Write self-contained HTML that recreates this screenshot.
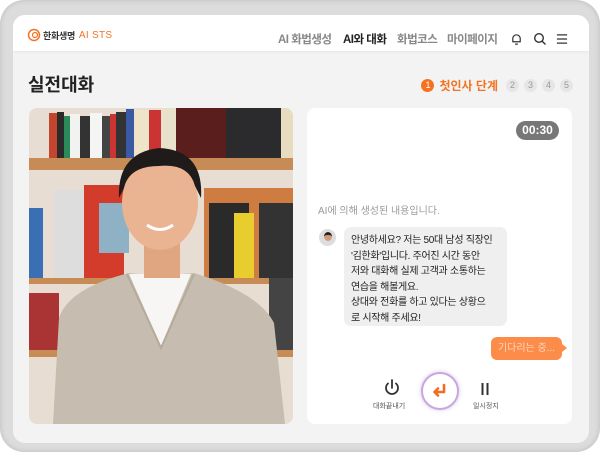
<!DOCTYPE html>
<html><head><meta charset="utf-8"><style>
*{margin:0;padding:0;box-sizing:border-box}
body{width:600px;height:457px;background:#fff;font-family:"Liberation Sans","Noto Sans CJK KR",sans-serif;position:relative;overflow:hidden}
.bezel{position:absolute;left:0;top:0;width:600px;height:452px;background:#dcdcdc;border-radius:24px;box-shadow:inset 0 0 6px rgba(0,0,0,.15)}
.screen{position:absolute;left:13px;top:15px;width:576px;height:428px;background:#f3f3f3;border-radius:12px;overflow:hidden}
.hdr{position:absolute;left:0;top:0;width:576px;height:36px;background:#fff;box-shadow:0 1px 3px rgba(0,0,0,.06)}
.logo{position:absolute;left:14px;top:13px;display:flex;align-items:center;font-size:9px;font-weight:bold;color:#333;letter-spacing:-.3px}
.nav span{position:absolute;top:16px;font-size:11.5px;color:#888;font-weight:bold;letter-spacing:-.5px;white-space:nowrap}
.title{position:absolute;left:15px;top:56px;font-size:18px;font-weight:bold;color:#222}
.steps{position:absolute;right:16px;top:62px;display:flex;align-items:center;gap:5px;font-size:11px}
.dot{width:13px;height:13px;border-radius:50%;background:#e6e6e6;color:#999;font-size:9px;text-align:center;line-height:13px}
.photo{position:absolute;left:16px;top:93px;width:264px;height:316px;border-radius:8px;overflow:hidden}
.chat{position:absolute;left:294px;top:93px;width:265px;height:316px;background:#fff;border-radius:8px}
</style></head><body>
<div class="bezel"></div>
<div class="screen">
 <div class="hdr">
  <div class="logo"><svg width="14" height="14" viewBox="0 0 14 14"><circle cx="7" cy="7" r="5.5" fill="none" stroke="#f37321" stroke-width="1.5"/><circle cx="8" cy="7" r="2.5" fill="none" stroke="#f37321" stroke-width="1.2"/></svg><span style="margin-left:2px">한화생명</span><span style="color:#f37321;margin-left:4px;font-size:10px;font-weight:normal;letter-spacing:.3px">AI STS</span></div>
  <div class="nav"><span style="left:265px">AI 화법생성</span><span style="left:330px;color:#222">AI와 대화</span><span style="left:384px">화법코스</span><span style="left:434px">마이페이지</span></div>
  <svg style="position:absolute;left:497px;top:17px" width="13" height="14" viewBox="0 0 14 14" fill="none" stroke="#333" stroke-width="1.3"><path d="M3 10V6.5a4 4 0 0 1 8 0V10H2.5h9M5.5 12.5h3"/></svg>
  <svg style="position:absolute;left:520px;top:17px" width="14" height="14" viewBox="0 0 14 14" fill="none" stroke="#333" stroke-width="1.4"><circle cx="6" cy="6" r="4.3"/><path d="M9.2 9.2L12.5 12.5"/></svg>
  <svg style="position:absolute;left:543px;top:17px" width="12" height="14" viewBox="0 0 13 14" stroke="#333" stroke-width="1.3"><path d="M1 2.5h11M1 7h11M1 11.5h11"/></svg>
 </div>
 <div class="title">실전대화</div>
 <div class="steps"><span style="display:inline-block;width:13px;height:13px;border-radius:50%;background:#f37321;color:#fff;font-size:9px;text-align:center;line-height:13px">1</span><span style="color:#f37321;font-weight:bold;font-size:12px;margin-right:3px">첫인사 단계</span><span class="dot">2</span><span class="dot">3</span><span class="dot">4</span><span class="dot">5</span></div>
 <div class="photo"><svg width="264" height="316" viewBox="0 0 264 316">
  <rect width="264" height="316" fill="#e8ddd2"/>
  <g>
   <rect x="20" y="5" width="8" height="45" fill="#c4452e"/><rect x="28" y="4" width="7" height="46" fill="#2a2a2a"/><rect x="35" y="8" width="6" height="42" fill="#2a8a5a"/><rect x="41" y="6" width="10" height="44" fill="#f2f2f0"/><rect x="51" y="8" width="10" height="42" fill="#333"/><rect x="61" y="5" width="12" height="45" fill="#f5f5f3"/><rect x="73" y="8" width="8" height="42" fill="#444"/><rect x="81" y="6" width="6" height="44" fill="#c33"/><rect x="87" y="4" width="10" height="46" fill="#333"/><rect x="97" y="1" width="8" height="49" fill="#3b5aa5"/><rect x="105" y="2" width="15" height="48" fill="#eee4c8"/><rect x="120" y="2" width="12" height="48" fill="#c33"/><rect x="132" y="0" width="15" height="50" fill="#e8e2cc"/><rect x="147" y="0" width="50" height="50" fill="#5a1e1c"/><rect x="197" y="0" width="55" height="50" fill="#2b2b2e"/><rect x="252" y="0" width="12" height="50" fill="#e8dcc0"/>
  </g>
  <rect y="50" width="264" height="12" fill="#c78b55"/>
  <rect x="0" y="100" width="14" height="70" fill="#3a6fb5"/>
  <rect x="25" y="82" width="40" height="88" fill="#ddd"/><rect x="55" y="77" width="40" height="93" fill="#d33b2a"/><rect x="70" y="95" width="30" height="50" fill="#8fb1c6"/>
  <rect x="175" y="80" width="89" height="90" fill="#cf7c43"/><rect x="180" y="95" width="40" height="75" fill="#2a2a2a"/><rect x="205" y="105" width="20" height="65" fill="#e8cd2e"/><rect x="230" y="95" width="34" height="75" fill="#333"/>
  <rect y="170" width="264" height="6" fill="#c78b55"/>
  <rect x="0" y="185" width="30" height="57" fill="#a33"/><rect x="240" y="170" width="24" height="72" fill="#444"/>
  <rect y="242" width="264" height="7" fill="#c78b55"/>
  <path d="M24 316 L30 210 Q40 180 100 165 L130 168 L165 165 Q230 185 245 215 L256 316Z" fill="#c6bdb0"/>
  <path d="M100 166 L162 166 L132 238Z" fill="#f7f6f4"/>
  <path d="M98 166 L132 240 L165 166" fill="none" stroke="#b5ab9c" stroke-width="2"/>
  <rect x="115" y="120" width="36" height="50" fill="#e0a682"/>
  <ellipse cx="131" cy="95" rx="38" ry="47" fill="#eab391"/>
  <path d="M90 90 Q88 45 130 40 Q175 42 172 90 L166 78 Q160 55 130 58 Q100 58 95 80Z" fill="#1f1b1a"/>
  <path d="M118 117 Q131 126 144 117" stroke="#fff" stroke-width="3" fill="none"/>
 </svg></div>
 <div class="chat">
  <div style="position:absolute;right:13px;top:13px;background:#777;color:#fff;border-radius:10px;font-size:12px;font-weight:bold;width:43px;height:19px;text-align:center;line-height:19px">00:30</div>
  <div style="position:absolute;left:11px;top:94px;font-size:10px;color:#999">AI에 의해 생성된 내용입니다.</div>
  <div style="position:absolute;left:12px;top:121px;width:17px;height:17px;border-radius:50%;background:#ddd;overflow:hidden"><div style="margin:3px auto 0;width:8px;height:9px;border-radius:50%;background:#d29a7c;border-top:3px solid #222"></div></div>
  <div style="position:absolute;left:37px;top:119px;width:163px;height:99px;background:#efefef;border-radius:7px;padding:6px 7px;font-size:10px;line-height:15.6px;color:#222;letter-spacing:-.3px;white-space:nowrap">안녕하세요? 저는 50대 남성 직장인<br>'김한화'입니다. 주어진 시간 동안<br>저와 대화해 실제 고객과 소통하는<br>연습을 해볼게요.<br>상대와 전화를 하고 있다는 상황으<br>로 시작해 주세요!</div>
  <div style="position:absolute;left:184px;top:229px;width:71px;height:23px;background:#fb8c4a;border-radius:6px;color:#ffd8bd;font-size:10px;line-height:23px;text-align:center">기다리는 중...</div>
  <div style="position:absolute;left:255px;top:236px;width:0;height:0;border-left:5px solid #fb8c4a;border-top:4px solid transparent;border-bottom:4px solid transparent"></div>
  <svg style="position:absolute;left:76px;top:270px" width="18" height="20" viewBox="0 0 18 20" fill="none" stroke="#333" stroke-width="1.8" stroke-linecap="round"><path d="M9 2v8M5 5.5a6 6 0 1 0 8 0"/></svg>
  <div style="position:absolute;left:66px;top:293px;font-size:7px;color:#555">대화끝내기</div>
  <div style="position:absolute;left:114px;top:264px;width:38px;height:38px;border-radius:50%;background:#fff;border:2px solid #c9a6dd;box-shadow:0 0 4px rgba(180,140,220,.5)"></div>
  <svg style="position:absolute;left:124px;top:274px" width="18" height="18" viewBox="0 0 18 18" fill="none" stroke="#f36b21" stroke-width="2.6" stroke-linecap="round" stroke-linejoin="round"><path d="M13 3v7H4M7 6.5L3.5 10 7 13.5"/></svg>
  <svg style="position:absolute;left:173px;top:274px" width="10" height="14" viewBox="0 0 10 14" stroke="#333" stroke-width="2"><path d="M2.5 1v12M7.5 1v12"/></svg>
  <div style="position:absolute;left:166px;top:293px;font-size:7px;color:#555">일시정지</div>
 </div>
</div>
</body></html>
